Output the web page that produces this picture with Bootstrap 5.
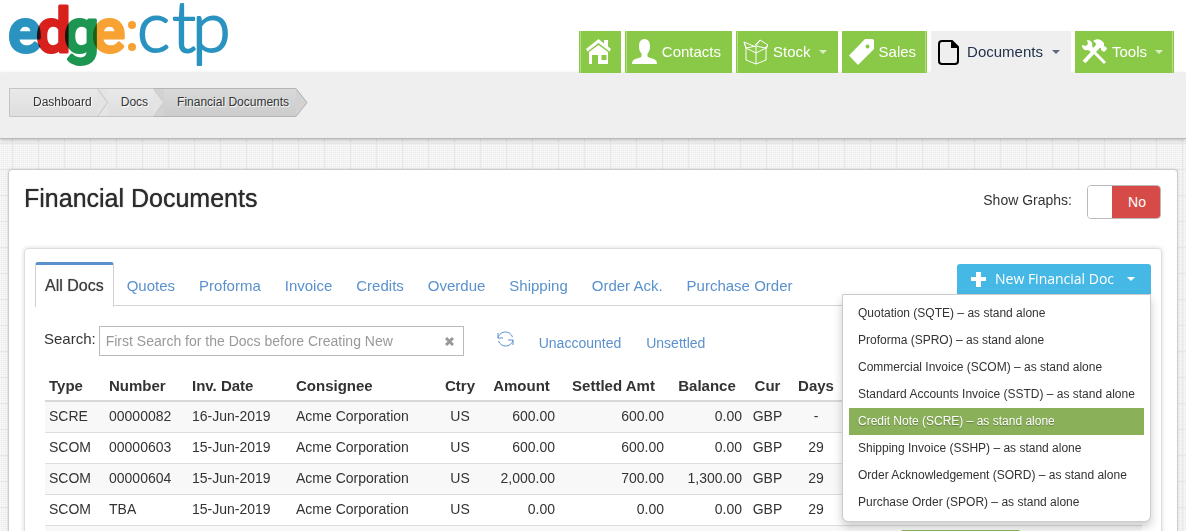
<!DOCTYPE html>
<html lang="en">
<head>
<meta charset="utf-8">
<meta name="viewport" content="width=device-width, initial-scale=1">
<title>Financial Documents</title>
<link rel="stylesheet" href="https://cdn.jsdelivr.net/npm/bootstrap@5.3.0/dist/css/bootstrap.min.css">
<style>
body{font-family:"Liberation Sans",Arial,sans-serif;font-size:14px;line-height:20px;color:#333;height:100vh;overflow:hidden;
  background-color:#f6f6f6;
  background-image:linear-gradient(90deg,#e8e8e8 1px,transparent 1px),linear-gradient(#e8e8e8 1px,transparent 1px),conic-gradient(#ebebeb 25%,transparent 0);
  background-size:26px 26px,26px 26px,2px 2px;background-position:12px 0,0 13px,0 0}
a{text-decoration:none;color:#5a91cc}
.brand-logo{display:block;overflow:visible}
.brand-logo .over{mix-blend-mode:multiply}
.main-nav{gap:4px;padding-right:12px}
.main-nav .nav-link{display:flex;align-items:center;gap:5px;height:42px;padding:0 11px 0 7px;background:#89c947;color:#fff;font-size:15px;
  box-shadow:inset 1px 0 #89c947,inset 2px 0 #b4dc8a}
.main-nav .home-link{padding-right:9px}
.main-nav .nav-link.rule-end{box-shadow:inset -1px 0 #89c947,inset -2px 0 #b4dc8a}
.main-nav .nav-link.active{background:#efefef;color:#22334b;box-shadow:none;gap:8px}
.main-nav .dropdown-toggle::after,.new-btn::after{margin:0;border-width:4px 4px 0;border-style:solid;border-color:currentColor transparent transparent;opacity:.7}
.main-nav .dropdown-toggle::after{margin-left:3px}
.main-nav .active::after{margin-left:1px}
.crumb-bar{background:#efefef;height:66px;padding:15px 9px 0;border-bottom:1px solid #b8b8b8;box-shadow:0 1px 4px rgba(0,0,0,.25)}
.crumbs{font-size:12px;line-height:27px;text-shadow:1px 1px 1px #fff}
.crumbs li{display:flex;height:29px}
.crumbs a,.crumbs .here{color:#333;padding:0 5px 0 13px;border:solid #c4c4c4;border-width:1px 0;background:linear-gradient(#e9e9e9,#dedede)}
.crumbs li:first-child a{padding-left:23px;border-left-width:1px}
.crumbs .here{padding-right:7px;background:linear-gradient(#d9d9d9,#cccccc);border-color:#b4b4b4}
.page-panel{margin:30px 8px 0;height:600px;padding:15px 15px 0;background:#fff;border:1px solid #ccc;border-radius:4px;box-shadow:0 0 3px rgba(0,0,0,.12)}
.page-title{font-size:25px;line-height:26px;font-weight:400;color:#2c2c2c;text-shadow:0 0 1px #2c2c2c;margin:0}
.graph-row{height:63px}
.graph-row label{margin:5px 15px 0 0}
.graph-switch{height:34px;width:74px;border:1px solid #bbb;border-radius:4px;overflow:hidden;margin-right:1px}
.graph-switch input{appearance:none;width:24px;height:32px;background:#fff;margin:0}
.graph-switch span{flex:1;background:#d64b47;color:#fff;text-align:center;line-height:33px;padding-left:2px}
.docs-box{height:500px;padding:13px 10px 0;border:1px solid #ddd;border-radius:4px;box-shadow:0 0 4px rgba(0,0,0,.16)}
.tab-strip{border-bottom:1px solid #d5d5d5;height:44px}
.tab-strip .nav{--bs-nav-tabs-border-width:0;gap:2px;font-size:15px;flex-wrap:nowrap}
.tab-strip .nav-link{margin:0;padding:13px 10px 9px;border:1px solid transparent;color:#5a91cc;line-height:20px;height:44px}
.tab-strip .nav-link.active{height:45px;padding:11px 9px 10px;border:1px solid #d0d0d0;border-top:3px solid #5a91cc;border-bottom:0;border-radius:3px 3px 0 0;color:#3c3c3c;background:#fff;font-size:16px;text-shadow:0 0 1px #777}
.new-btn{height:30px;width:194px;margin-top:2px;padding:0 16px 0 14px;border:0;border-radius:3px 3px 0 0;background:#46b8e6!important;color:#fff!important;font:14px/30px "Open Sans",sans-serif;display:flex;align-items:center;gap:9px}
.new-btn::after{opacity:1;margin-left:auto}
.new-menu{width:309px;padding:5px 6px;border:1px solid #ccc;border-radius:0 0 6px 6px;font-size:12px;color:#333;box-shadow:0 5px 10px rgba(0,0,0,.2);top:100%;right:0}
.new-menu .dropdown-item{padding:3px 9px 4px;line-height:20px;color:#333}
.new-menu .dropdown-item.active{background:#8ab15a;color:#fff;text-shadow:0 1px 1px rgba(0,0,0,.3)}
.filter-row{padding:20px 0 0 9px;height:60px}
.filter-row label{font-size:15px;line-height:26px;margin-right:3px}
.filter-row .quick-link{margin:7px 25px 0 0}
.search-wrap{width:365px;height:30px;border:1px solid #bbb}
.search-wrap input{flex:1;border:0;outline:0;padding:0 6px;min-width:0;color:#333;background:none}
.search-wrap input::placeholder{color:#999;opacity:1}
.search-wrap button,.refresh-btn{border:0;background:none;padding:0}
.search-wrap button{padding-right:9px;line-height:0}
.refresh-btn{margin:4px 25px 0 33px;height:18px;line-height:0}
.docs-table{width:calc(100% - 19px);margin:5px 0 0 10px;table-layout:fixed;border-collapse:separate;border-spacing:0}
.docs-table th{font-size:15px;line-height:20px;padding:0 4px 4px;border-bottom:2px solid #d8d8d8;height:31px;vertical-align:bottom;white-space:nowrap}
.docs-table td{padding:4px 4px 6px;height:31px;border-bottom:1px solid #ddd;white-space:nowrap}
.docs-table tbody tr:nth-child(odd){background:#f8f8f8}
.docs-table .row-btn{display:block;width:119px;height:20px;border:0;background:#8ab15a;border-radius:2px}
</style>
</head>
<body>
<header class="bg-white d-flex align-items-end justify-content-between">
  <a href="#" aria-label="edge:ctp home">
    <svg class="brand-logo" width="240" height="73" viewBox="0 0 240 73" font-family="Roboto,sans-serif" font-size="62" font-weight="500" stroke-width="3" stroke-linejoin="round">
      <text class="over" x="8" y="52" fill="#2a93c0" stroke="#2a93c0">e</text>
      <text class="over" x="36" y="52" fill="#d8211d" stroke="#d8211d">d</text>
      <text class="over" x="64" y="52" fill="#1d9652" stroke="#1d9652">g</text>
      <text class="over" x="92" y="52" fill="#f7a233" stroke="#f7a233">e</text>
      <circle cx="132" cy="25" r="4" fill="#f7a233"/><circle cx="132" cy="47" r="4" fill="#f7a233"/>
      <g font-family="Lato,sans-serif" font-size="70" font-weight="300" fill="#2a93c0" stroke="#2a93c0" stroke-width="2">
        <text x="137" y="52">c</text><text x="172" y="52">t</text><text x="192" y="52">p</text>
      </g>
    </svg>
  </a>
  <nav aria-label="Main">
    <ul class="nav main-nav">
      <li><a class="nav-link home-link" href="#" aria-label="Home"><svg width="26" height="26" viewBox="0 0 26 26" fill="#fff"><path d="M12.500 0L0 10l1.500 2.500 11-8.500 11 8.500L25 10l-3-2.500V1h-4v3.500z"/><path d="M12.500 6L3 13v12h3v-9h6v9h10V13zm3 10h5v5h-5z" fill-rule="evenodd"/></svg></a></li>
      <li><a class="nav-link" href="#"><svg width="25" height="26" viewBox="0 0 25 26" fill="#fff"><path d="M12.500 0C16 0 18 3 18 7c0 4-1 6-2.500 7.500V17c0 1 1 1.500 3 2 4 1 6.500 2 6.500 6H0c0-4 2.500-5 6.500-6 2-.5 3-1 3-2v-2.500C8 13 7 11 7 7c0-4 2-7 5.500-7z"/></svg>Contacts</a></li>
      <li><a class="nav-link dropdown-toggle" href="#"><svg width="25" height="26" viewBox="0 0 25 26" fill="none" stroke="#fff" stroke-linejoin="round"><path d="M3 9v12l10 4V14L3 9l-2-6 12 5v6M13 14l10-5v12l-10 4M3 9l10-2M13 7l4-6 8 5-3 3-9-2M17 1l-5 5M1 3l2 6M25 6l-2 4"/></svg>Stock</a></li>
      <li><a class="nav-link rule-end" href="#"><svg width="25" height="26" viewBox="0 0 25 26" fill="#fff"><path fill-rule="evenodd" d="M16 0h7q2 0 2 2v8L9 26 0 16.500zM18.500 5.500a2 2 0 1 0 .1 0z"/></svg>Sales</a></li>
      <li><a class="nav-link dropdown-toggle active" href="#" aria-current="page"><svg width="21" height="26" viewBox="0 0 21 26"><path d="M4 2h10l6 6v14q0 3-3 3H4q-3 0-3-3V5q0-3 3-3z" fill="none" stroke="#000" stroke-width="2"/><path d="M13 1v8h8z"/></svg>Documents</a></li>
      <li><a class="nav-link dropdown-toggle rule-end" href="#"><svg width="25" height="26" viewBox="0 0 25 26" fill="none" stroke="#fff"><path d="M7 8l16 16" stroke-width="3"/><path d="M16 8L2 23" stroke-width="4"/><path d="M5 1l1 4-2 2-4-1c0 4 3 6 6 5l3 2 3-3-2-3c1-3-1-6-5-6z" fill="#fff" stroke="none"/><path d="M11 2c4-3 8-2 11 2v3l2 1 1 2-3 3-3-2V9h-2l-3 3-3-3 3-3c0-2-1-3-3-4z" fill="#fff" stroke="none"/></svg>Tools</a></li>
    </ul>
  </nav>
</header>

<div class="crumb-bar">
  <nav aria-label="Breadcrumb">
    <ol class="crumbs list-unstyled d-flex m-0">
      <li><a href="#">Dashboard</a><svg width="11" height="29"><path d="M0 0h11v29H0z" fill="#e4e4e4"/><path d="M0 .5h11M0 28.500h11M0 0l10.500 14.500L0 29" fill="none" stroke="#c4c4c4"/></svg></li>
      <li><a href="#">Docs</a><svg width="11" height="29"><path d="M0 0h11v29H0z" fill="#d2d2d2"/><path d="M0 0l11 14.500L0 29z" fill="#e4e4e4"/><path d="M0 .5h11M0 28.500h11" stroke="#b4b4b4"/><path d="M0 0l10.500 14.500L0 29" fill="none" stroke="#c8c8c8"/></svg></li>
      <li><span class="here" aria-current="page">Financial Documents</span><svg width="12" height="29"><path d="M0 .5l11 14-11 14z" fill="#d2d2d2"/><path d="M0 .5l11 14-11 14" fill="none" stroke="#b0b0b0"/></svg></li>
    </ol>
  </nav>
</div>

<main class="page-panel">
  <div class="graph-row d-flex justify-content-between align-items-start">
    <h1 class="page-title">Financial Documents</h1>
    <div class="d-flex">
      <label for="graphs">Show Graphs:</label>
      <div class="graph-switch d-flex"><input type="checkbox" role="switch" id="graphs"><span>No</span></div>
    </div>
  </div>

  <section class="docs-box">
    <div class="tab-strip d-flex justify-content-between">
      <ul class="nav nav-tabs">
        <li><a class="nav-link active" href="#">All Docs</a></li>
        <li><a class="nav-link" href="#">Quotes</a></li>
        <li><a class="nav-link" href="#">Proforma</a></li>
        <li><a class="nav-link" href="#">Invoice</a></li>
        <li><a class="nav-link" href="#">Credits</a></li>
        <li><a class="nav-link" href="#">Overdue</a></li>
        <li><a class="nav-link" href="#">Shipping</a></li>
        <li><a class="nav-link" href="#">Order Ack.</a></li>
        <li><a class="nav-link" href="#">Purchase Order</a></li>
      </ul>
      <div class="dropdown align-self-start">
        <button type="button" class="btn new-btn dropdown-toggle" aria-expanded="true"><svg width="15" height="15" fill="#fff"><path d="M5 0h5v5h5v4h-5v6H5V9H0V5h5z"/></svg>New Financial Doc</button>
        <div class="dropdown-menu new-menu show">
          <a class="dropdown-item" href="#">Quotation (SQTE) – as stand alone</a>
          <a class="dropdown-item" href="#">Proforma (SPRO) – as stand alone</a>
          <a class="dropdown-item" href="#">Commercial Invoice (SCOM) – as stand alone</a>
          <a class="dropdown-item" href="#">Standard Accounts Invoice (SSTD) – as stand alone</a>
          <a class="dropdown-item active" href="#">Credit Note (SCRE) – as stand alone</a>
          <a class="dropdown-item" href="#">Shipping Invoice (SSHP) – as stand alone</a>
          <a class="dropdown-item" href="#">Order Acknowledgement (SORD) – as stand alone</a>
          <a class="dropdown-item" href="#">Purchase Order (SPOR) – as stand alone</a>
        </div>
      </div>
    </div>

    <div class="filter-row d-flex align-items-start">
      <label for="search">Search:</label>
      <div class="search-wrap d-flex align-items-center">
        <input type="text" id="search" placeholder="First Search for the Docs before Creating New">
        <button type="button" aria-label="Clear search"><svg width="9" height="9" viewBox="0 0 9 9"><path d="M1 1l7 7M8 1L1 8" stroke="#999" stroke-width="3"/></svg></button>
      </div>
      <button type="button" class="refresh-btn" aria-label="Refresh"><svg width="17" height="16" viewBox="0 0 17 16" fill="none" stroke="#5a91cc"><path d="M1 2v5h5M1 7C2 3 5 1 8.500 1c3 0 6 2 7 5M16 14V9h-5M16 9c-1 4-4 6-7.500 6-3 0-6-2-7-5"/></svg></button>
      <a href="#" class="quick-link">Unaccounted</a>
      <a href="#" class="quick-link">Unsettled</a>
    </div>

    <table class="docs-table">
      <colgroup><col style="width:60px"><col style="width:83px"><col style="width:104px"><col style="width:144px"><col style="width:48px"><col style="width:75px"><col style="width:109px"><col style="width:78px"><col style="width:43px"><col style="width:54px"><col style="width:54px"><col></colgroup>
      <thead><tr><th>Type</th><th>Number</th><th>Inv. Date</th><th>Consignee</th><th class="text-center">Ctry</th><th class="text-center">Amount</th><th class="text-center">Settled Amt</th><th class="text-center">Balance</th><th class="text-center">Cur</th><th class="text-center">Days</th><th></th><th></th></tr></thead>
      <tbody>
        <tr><td>SCRE</td><td>00000082</td><td>16-Jun-2019</td><td>Acme Corporation</td><td class="text-center">US</td><td class="text-end">600.00</td><td class="text-end">600.00</td><td class="text-end">0.00</td><td class="text-center">GBP</td><td class="text-center">-</td><td></td><td></td></tr>
        <tr><td>SCOM</td><td>00000603</td><td>15-Jun-2019</td><td>Acme Corporation</td><td class="text-center">US</td><td class="text-end">600.00</td><td class="text-end">600.00</td><td class="text-end">0.00</td><td class="text-center">GBP</td><td class="text-center">29</td><td></td><td></td></tr>
        <tr><td>SCOM</td><td>00000604</td><td>15-Jun-2019</td><td>Acme Corporation</td><td class="text-center">US</td><td class="text-end">2,000.00</td><td class="text-end">700.00</td><td class="text-end">1,300.00</td><td class="text-center">GBP</td><td class="text-center">29</td><td></td><td></td></tr>
        <tr><td>SCOM</td><td>TBA</td><td>15-Jun-2019</td><td>Acme Corporation</td><td class="text-center">US</td><td class="text-end">0.00</td><td class="text-end">0.00</td><td class="text-end">0.00</td><td class="text-center">GBP</td><td class="text-center">29</td><td></td><td></td></tr>
        <tr><td></td><td></td><td></td><td></td><td></td><td></td><td></td><td></td><td></td><td></td><td></td><td><button type="button" class="row-btn" aria-label="Open"></button></td></tr>
      </tbody>
    </table>
  </section>
</main>
<script src="https://cdn.jsdelivr.net/npm/bootstrap@5.3.0/dist/js/bootstrap.bundle.min.js"></script>
</body>
</html>
